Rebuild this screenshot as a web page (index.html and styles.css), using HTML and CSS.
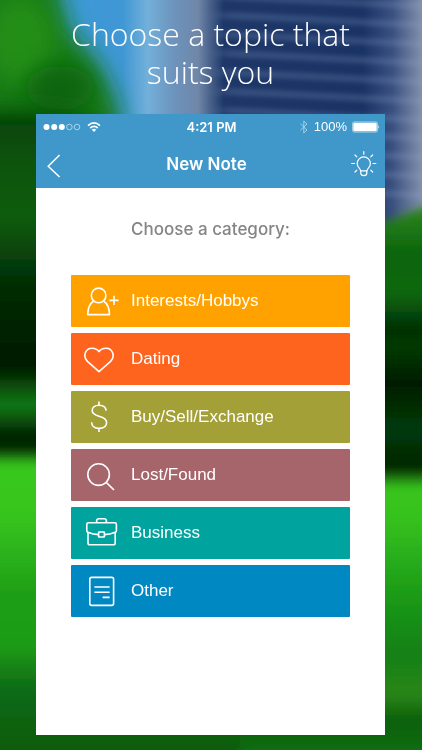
FILE: index.html
```html
<!DOCTYPE html>
<html lang="en">
  <head>
    <meta charset="UTF-8" />
    <meta name="viewport" content="width=device-width, initial-scale=1.0" />
    <title>New Note</title>
    <link rel="stylesheet" href="styles.css">
  </head>
  <body>
    <svg class="backdrop" viewBox="0 0 422 750" preserveAspectRatio="none" aria-hidden="true">
      <defs>
        <linearGradient id="sky" x1="0" x2="1" y1="0" y2="0">
          <stop offset="0.15" stop-color="#3d9ad6" />
          <stop offset="0.29" stop-color="#3f97d4" />
          <stop offset="0.35" stop-color="#72b0da" />
          <stop offset="0.41" stop-color="#6d94bd" />
          <stop offset="0.47" stop-color="#6f86a8" />
          <stop offset="0.53" stop-color="#1d3768" />
          <stop offset="0.86" stop-color="#1a3365" />
          <stop offset="0.93" stop-color="#3a5080" />
          <stop offset="1" stop-color="#8290ab" />
        </linearGradient>
        <linearGradient id="left" gradientUnits="userSpaceOnUse" x1="0" x2="0" y1="0" y2="750">
          <stop offset="0.155" stop-color="#06420a" />
          <stop offset="0.22" stop-color="#08540c" />
          <stop offset="0.29" stop-color="#0a5c0e" />
          <stop offset="0.38" stop-color="#042c05" />
          <stop offset="0.49" stop-color="#001a00" />
          <stop offset="0.54" stop-color="#127a14" />
          <stop offset="0.58" stop-color="#022203" />
          <stop offset="0.6" stop-color="#052c05" />
          <stop offset="0.62" stop-color="#38c81e" />
          <stop offset="0.69" stop-color="#36c41c" />
          <stop offset="0.79" stop-color="#1f9f18" />
          <stop offset="0.86" stop-color="#1f9c18" />
          <stop offset="0.92" stop-color="#0d6a14" />
          <stop offset="1" stop-color="#085c0e" />
        </linearGradient>
        <linearGradient id="right" gradientUnits="userSpaceOnUse" x1="0" x2="0" y1="0" y2="750">
          <stop offset="0.28" stop-color="#2c8414" />
          <stop offset="0.34" stop-color="#0a6410" />
          <stop offset="0.39" stop-color="#0a680f" />
          <stop offset="0.44" stop-color="#032e04" />
          <stop offset="0.46" stop-color="#053c06" />
          <stop offset="0.51" stop-color="#001c00" />
          <stop offset="0.57" stop-color="#053a08" />
          <stop offset="0.625" stop-color="#022404" />
          <stop offset="0.65" stop-color="#37c51c" />
          <stop offset="0.69" stop-color="#36c21c" />
          <stop offset="0.8" stop-color="#1a9818" />
          <stop offset="0.87" stop-color="#128014" />
          <stop offset="0.925" stop-color="#2a8614" />
          <stop offset="0.96" stop-color="#0a600e" />
          <stop offset="1" stop-color="#126c12" />
        </linearGradient>
        <filter id="soft" x="-100%" y="-100%" width="300%" height="300%">
          <feGaussianBlur stdDeviation="11" />
        </filter>
        <filter id="light" x="-10%" y="-10%" width="120%" height="120%">
          <feGaussianBlur stdDeviation="5" />
        </filter>
        <filter id="stripe" x="-20%" y="-20%" width="140%" height="140%">
          <feGaussianBlur stdDeviation="9 2" />
        </filter>
      </defs>
      <rect width="422" height="750" fill="url(#sky)" />
      <path d="M220 -4L460 8M220 15L460 27M220 34L460 46M220 53L460 65M220 72L460 84M220 91L460 103M220 110L460 122M330 134L460 140M330 153L460 159M330 172L460 178M330 191L460 197" filter="url(#stripe)" stroke="#8fa6cc" stroke-opacity="0.22" stroke-width="7" fill="none" />
      <path d="M-80 -50H50L68 30Q104 60 120 115V300H-80Z" fill="#167a12" filter="url(#soft)" />
      <ellipse cx="20" cy="40" rx="34" ry="44" fill="#228e14" filter="url(#soft)" />
      <ellipse cx="60" cy="88" rx="34" ry="22" fill="#0a650c" filter="url(#soft)" />
      <ellipse cx="10" cy="130" rx="90" ry="18" fill="#044006" filter="url(#soft)" />
      <rect x="-80" y="124" width="380" height="700" fill="url(#left)" filter="url(#light)" />
      <path d="M240 238L385 222L500 178V850H240Z" fill="url(#right)" filter="url(#light)" />
    </svg>

    <main class="page">
      <h1 class="headline">Choose a topic that suits you</h1>

      <section class="phone">
        <header class="topbar">
          <div class="status">
            <div class="status-left">
              <svg width="38" height="12" viewBox="0 0 38 12" aria-hidden="true">
                <g fill="#fff">
                  <circle cx="3.5" cy="6" r="3" />
                  <circle cx="11.2" cy="6" r="3" />
                  <circle cx="18.8" cy="6" r="3" />
                </g>
                <g fill="none" stroke="#d5eaf5" stroke-width="0.7">
                  <circle cx="26.4" cy="6" r="2.8" />
                  <circle cx="34" cy="6" r="2.8" />
                </g>
              </svg>
              <svg width="14" height="12" viewBox="0 0 14 12" aria-hidden="true">
                <g fill="none" stroke="#fff" stroke-width="1.7">
                  <path d="M1 4.6Q7 -0.8 13 4.6" />
                  <path d="M3.2 7Q7 3.6 10.8 7" />
                </g>
                <path d="M4.8 8.7Q7 6.9 9.2 8.7L7 11Z" fill="#fff" />
              </svg>
            </div>
            <span class="time">4:21 PM</span>
            <div class="status-right">
              <svg width="10" height="14" viewBox="0 0 10 14" aria-hidden="true">
                <path d="M1.4 3.8L8 10L4.8 13V1L8 4L1.4 10.2" fill="none" stroke="#a5d0e8" stroke-width="1" />
              </svg>
              <span class="percent">100%</span>
              <svg width="28" height="12" viewBox="0 0 28 12" aria-hidden="true">
                <rect x="0.5" y="0.9" width="25" height="10.2" rx="1.6" fill="none" stroke="#b8dcee" stroke-width="0.8" />
                <rect x="1.3" y="1.7" width="23.4" height="8.6" rx="1" fill="#fff" />
                <path d="M26.4 4.2Q28 6 26.4 7.8Z" fill="#fff" />
              </svg>
            </div>
          </div>
          <nav class="nav">
            <button class="nav-btn" type="button" aria-label="Back">
              <svg width="22" height="28" viewBox="0 0 22 28">
                <path d="M15.6 5L4.2 16.2L15.6 27" fill="none" stroke="#fff" stroke-width="1.5" />
              </svg>
            </button>
            <h2 class="title">New Note</h2>
            <button class="nav-btn" type="button" aria-label="Tips">
              <svg width="30" height="28" viewBox="0 0 30 28">
                <g fill="none" stroke="#fff" stroke-width="1.2" stroke-linecap="round">
                  <path d="M13.6 20.8C13.6 18.5 10.2 17.4 10.2 13.5A6.6 6.6 0 0 1 23.4 13.5C23.4 17.4 20 18.5 20 20.8Z" />
                  <path d="M13.8 21V23.2Q13.8 25.6 16.8 25.6Q19.8 25.6 19.8 23.2V21" />
                  <path d="M16.8 1.5V4.2M8 5L9.8 6.8M25.6 5L23.8 6.8M4.7 13.5H7.5M26 13.5H28.8M8 22L9.8 20.2M25.6 22L23.8 20.2" />
                </g>
              </svg>
            </button>
          </nav>
        </header>

        <p class="prompt">Choose a category:</p>

        <div class="categories">
          <button class="category interests" type="button">
            <svg class="icon" viewBox="0 0 36 32" aria-hidden="true">
              <circle cx="15.6" cy="10.4" r="7.3" />
              <path d="M10.8 16Q5 19.4 4.7 29.6H26.5Q26.2 19.4 20.4 16" />
              <path d="M26.4 15.4H35.6M31 10.8V20" />
            </svg>
            Interests/Hobbys
          </button>
          <button class="category dating" type="button">
            <svg class="icon" viewBox="0 0 36 32" aria-hidden="true">
              <path d="M16 28.6L4.4 18.4C-0.6 13.2 2.4 5.2 9 5.2C12.4 5.2 14.8 6.8 16 8.6C17.2 6.8 19.6 5.2 23 5.2C29.6 5.2 32.6 13.2 27.6 18.4Z" />
            </svg>
            Dating
          </button>
          <button class="category trade" type="button">
            <svg class="icon" viewBox="0 0 36 32" aria-hidden="true">
              <path d="M23.2 9.6C22.8 6 20 4.2 16 4.2C12 4.2 9.2 6.4 9.2 9.6C9.2 13.2 12 14.2 16 15.2C20.4 16.3 23.6 17.6 23.6 21.6C23.6 25.4 20.4 27.4 16 27.4C11.6 27.4 8.8 25.2 8.6 21.2M16 0.6V4.2M16 27.4V31" />
            </svg>
            Buy/Sell/Exchange
          </button>
          <button class="category lost" type="button">
            <svg class="icon" viewBox="0 0 36 32" aria-hidden="true">
              <circle cx="15.6" cy="15.6" r="10.8" />
              <path d="M23.2 23.4L31 31" />
            </svg>
            Lost/Found
          </button>
          <button class="category business" type="button">
            <svg class="icon" viewBox="0 0 36 32" aria-hidden="true">
              <path d="M5 15.4Q3.8 15 3.8 13.6V7.4Q3.8 5.8 5.4 5.8H31.8Q33.4 5.8 33.4 7.4V13.6Q33.4 15 32.2 15.4" />
              <path d="M13.6 5.6V4Q13.6 1.8 16 1.8H21Q23.4 1.8 23.4 4V5.6" />
              <path d="M5 15.4V26Q5 27.8 6.8 27.8H30.4Q32.2 27.8 32.2 26V15.4" />
              <path d="M5 15.2Q10 17.4 15.6 17.6M21.4 17.6Q27 17.4 32.2 15.2" />
              <rect x="15.6" y="15" width="5.8" height="5" rx="0.6" />
            </svg>
            Business
          </button>
          <button class="category other" type="button">
            <svg class="icon" viewBox="0 0 36 32" aria-hidden="true">
              <rect x="6.8" y="2.4" width="23.8" height="28" rx="1.8" />
              <path d="M11.4 12H26.6M11.4 17.2H26.6M19.6 22.4H26.6" />
            </svg>
            Other
          </button>
        </div>
      </section>
    </main>
  </body>
</html>
```
FILE: styles.css
```css
* {
  box-sizing: border-box;
}
body {
  margin: 0;
  font-family: "Liberation Sans", Arial, sans-serif;
  background-color: #0b630e;
}
.backdrop {
  position: fixed;
  inset: 0;
  z-index: -1;
  width: 100%;
  height: 100%;
}
.page {
  display: flex;
  flex-direction: column;
  min-height: 100vh;
  padding: 15px 37px 15px 36px;
}
.headline {
  margin: 0 0 23px;
  padding: 0 24px;
  font-family: "Open Sans", "Noto Sans", sans-serif;
  font-size: 32px;
  font-weight: 300;
  line-height: 38px;
  text-align: center;
  color: #fff;
}
.phone {
  flex: 1;
  background: #fff;
}
.topbar {
  height: 74px;
  color: #fff;
  background: #3f98c9;
}
.status {
  display: grid;
  grid-template-columns: 1fr auto 1fr;
  align-items: center;
  height: 25px;
  padding: 0 5px 0 7px;
}
.status-left,
.status-right {
  display: flex;
  align-items: center;
}
.status-left {
  gap: 6px;
}
.status-right {
  justify-content: flex-end;
  gap: 5px;
}
.time {
  font-family: "Inter", sans-serif;
  font-size: 13px;
  font-weight: 600;
}
.percent {
  font-size: 13px;
}
.nav {
  display: flex;
  align-items: center;
  justify-content: space-between;
  height: 49px;
  padding: 0 8px;
}
.nav-btn {
  display: flex;
  padding: 0;
  border: none;
  background: none;
  cursor: pointer;
}
.title {
  margin: 0;
  font-family: "Inter", sans-serif;
  font-size: 17px;
  font-weight: 600;
}
.prompt {
  margin: 30px 0 0;
  font-family: "Inter", sans-serif;
  font-size: 17px;
  font-weight: 500;
  line-height: 22px;
  text-align: center;
  color: #858585;
}
.categories {
  display: flex;
  flex-direction: column;
  gap: 6px;
  padding: 35px 35px;
}
.category {
  display: flex;
  align-items: center;
  gap: 12px;
  height: 52px;
  padding: 0 12px;
  border: none;
  border-radius: 1px;
  font-family: inherit;
  font-size: 17px;
  text-align: left;
  color: #fff;
  cursor: pointer;
}
.icon {
  width: 36px;
  height: 32px;
  fill: none;
  stroke: #fff;
  stroke-width: 1.6;
  stroke-linejoin: round;
}
.interests {
  background: #ffa200;
}
.dating {
  background: #ff641f;
}
.trade {
  background: #a4a038;
}
.lost {
  background: #a6646b;
}
.business {
  background: #00a39d;
}
.other {
  background: #0088c2;
}
```
